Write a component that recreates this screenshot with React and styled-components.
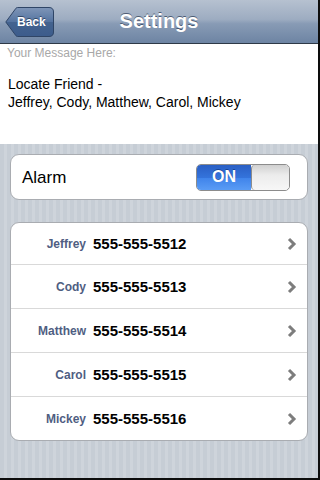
import React from "react";
import styled, { createGlobalStyle } from "styled-components";

const Global = createGlobalStyle`
  html, body { margin: 0; padding: 0; background: #0d0d0d; }
  body { font-family: "Liberation Sans", Arial, Helvetica, sans-serif; }
  * { box-sizing: border-box; }
`;

const Screen = styled.div`
  width: 320px;
  height: 480px;
  border-right: 2px solid #0d0d0d;
  border-bottom: 2px solid #0d0d0d;
  display: flex;
  flex-direction: column;
  background: repeating-linear-gradient(
    90deg,
    #c6cdd5 0px,
    #c6cdd5 4px,
    #ced4db 4px,
    #ced4db 7px
  );
  overflow: hidden;
`;

const NavBar = styled.header`
  height: 44px;
  flex: none;
  display: flex;
  align-items: center;
  position: relative;
  padding-left: 5px;
  background: linear-gradient(180deg, #b6c1d0 0%, #9dacc1 45%, #889bb5 55%, #6d84a3 100%);
  border-bottom: 1px solid #2e3947;
`;

const Title = styled.h1`
  position: absolute;
  left: 0;
  right: 0;
  top: 0;
  bottom: 0;
  margin: 0;
  display: flex;
  align-items: center;
  justify-content: center;
  font-size: 20px;
  font-weight: bold;
  color: #fff;
  text-shadow: 0 -1px 0 rgba(40, 55, 80, 0.7);
  pointer-events: none;
`;

const BackButton = styled.button`
  position: relative;
  z-index: 1;
  width: 49px;
  height: 30px;
  margin-top: 1px;
  padding: 0 0 0 12px;
  border: none;
  background: none;
  display: flex;
  align-items: center;
  font-family: inherit;
  font-size: 12px;
  font-weight: bold;
  color: #fff;
  text-shadow: 0 -1px 0 rgba(20, 35, 60, 0.6);
`;

const ButtonShape = styled.svg`
  position: absolute;
  inset: 0;
  z-index: -1;
`;

const ButtonLabel = styled.span`
  position: relative;
`;

const MessageArea = styled.section`
  height: 100px;
  flex: none;
  background: #fff;
  padding: 2px 7px 0 7px;
`;

const MessageLabel = styled.div`
  font-size: 12px;
  line-height: 14px;
  color: #a8a8a8;
`;

const MessageText = styled.p`
  margin: 15px 0 0 1px;
  font-size: 14px;
  line-height: 18px;
  color: #000;
`;

const Group = styled.div`
  margin: ${(p) => p.$top}px 10px 0 10px;
  background: #fff;
  border: 1px solid #a9acb1;
  border-radius: 9px;
  overflow: hidden;
`;

const Row = styled.div`
  height: ${(p) => p.$h || 44}px;
  display: flex;
  align-items: center;
  border-top: ${(p) => (p.$first ? "none" : "1px solid #d9d9d9")};
`;

const AlarmLabel = styled.span`
  flex: 1;
  padding-left: 11px;
  padding-top: 2px;
  font-size: 17px;
  color: #000;
`;

const Switch = styled.div`
  width: 94px;
  height: 27px;
  margin-right: 17px;
  border: 1px solid #8c8c8c;
  border-radius: 5px;
  overflow: hidden;
  display: flex;
`;

const SwitchOn = styled.div`
  width: 54px;
  display: flex;
  align-items: center;
  justify-content: center;
  font-size: 16px;
  font-weight: bold;
  color: #fff;
  text-shadow: 0 -1px 0 rgba(0, 30, 90, 0.5);
  background: linear-gradient(180deg, #2a5fc4 0%, #3473db 50%, #3f83ea 51%, #5a9cf5 100%);
`;

const SwitchThumb = styled.div`
  flex: 1;
  border-left: 1px solid #8c8c8c;
  border-radius: 4px;
  background: linear-gradient(180deg, #d0d0d0 0%, #ececec 40%, #f7f7f7 100%);
`;

const Name = styled.span`
  width: 75px;
  flex: none;
  text-align: right;
  font-size: 12px;
  font-weight: bold;
  color: #4f5e82;
`;

const Phone = styled.span`
  flex: 1;
  padding-left: 7px;
  font-size: 15px;
  font-weight: bold;
  color: #000;
`;

const Chevron = styled.svg`
  margin-right: 10px;
  flex: none;
`;

const contacts = [
  ["Jeffrey", "555-555-5512"],
  ["Cody", "555-555-5513"],
  ["Matthew", "555-555-5514"],
  ["Carol", "555-555-5515"],
  ["Mickey", "555-555-5516"],
];

export default function App() {
  return (
    <>
      <Global />
      <Screen>
        <NavBar>
          <BackButton>
            <ButtonShape width="49" height="30" viewBox="0 0 49 30">
              <defs>
                <linearGradient id="bb" x1="0" y1="0" x2="0" y2="1">
                  <stop offset="0" stopColor="#7f96b8" />
                  <stop offset="0.5" stopColor="#5473a0" />
                  <stop offset="0.51" stopColor="#44638f" />
                  <stop offset="1" stopColor="#3c5c8c" />
                </linearGradient>
              </defs>
              <path
                d="M0.8 15 L11 1.2 Q11.6 0.5 12.6 0.5 L44 0.5 Q48.5 0.5 48.5 5 L48.5 25 Q48.5 29.5 44 29.5 L12.6 29.5 Q11.6 29.5 11 28.8 Z"
                fill="url(#bb)"
                stroke="#2f4566"
                strokeWidth="1"
              />
            </ButtonShape>
            <ButtonLabel>Back</ButtonLabel>
          </BackButton>
          <Title>Settings</Title>
        </NavBar>

        <MessageArea>
          <MessageLabel>Your Message Here:</MessageLabel>
          <MessageText>
            Locate Friend -<br />
            Jeffrey, Cody, Matthew, Carol, Mickey
          </MessageText>
        </MessageArea>

        <Group $top={10}>
          <Row $first $h={44}>
            <AlarmLabel>Alarm</AlarmLabel>
            <Switch>
              <SwitchOn>ON</SwitchOn>
              <SwitchThumb />
            </Switch>
          </Row>
        </Group>

        <Group $top={22}>
          {contacts.map(([name, phone], i) => (
            <Row key={name} $first={i === 0} $h={i === 0 ? 41 : 44}>
              <Name>{name}</Name>
              <Phone>{phone}</Phone>
              <Chevron width="10" height="14" viewBox="0 0 10 14">
                <path d="M2 2 L7 7 L2 12" fill="none" stroke="#7d7d7d" strokeWidth="3" />
              </Chevron>
            </Row>
          ))}
        </Group>
      </Screen>
    </>
  );
}
